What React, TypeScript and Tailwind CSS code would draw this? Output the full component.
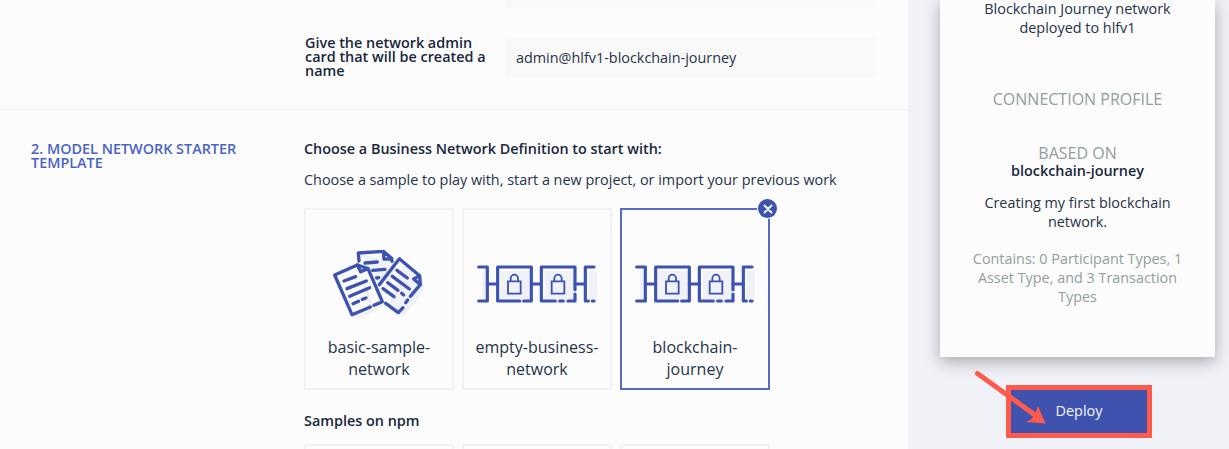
import type { ReactNode } from "react";

function PapersIcon() {
  return (
    <svg viewBox="30 39 294 216" className="h-[72px] w-[98px]" fill="none" strokeLinecap="round" strokeLinejoin="round">
      <path d="M62 125 L146 104 L200 210 L112 254 Z M128 58 L228 84 L218 130 L176 150Z M250 82 L314 138 L306 176 L248 247 L205 210Z" fill="#f1f2f7" />
      <g stroke="#3d53b0" strokeWidth="10">
        <path d="M117 78 L115 54 L190 49 L215 70 L216 79 M190 49 L192 72 L215 72" />
        <path d="M135 84 L172 81 M158 106 L195 103 M170 129 L176 128" />
        <path d="M112 90 L44 120 L96 239 L151 216 M162 211 L187 200 L144 101 L112 90" fill="#fcfcfd" />
        <path d="M112 90 L122 110 L144 101" />
        <path d="M72 138 L107 125 M81 161 L139 138 M89 184 L149 158 M99 206 L116 199 M127 193 L138 189" />
        <path d="M178 149 L238 71 L299 122 L301 149 L271 184 M263 195 L257 203 M249 218 L235 233 L197 205 M299 122 L281 132 L301 149" />
        <path d="M231 106 L262 129 M217 124 L268 162 M203 143 L234 166 M245 175 L251 180 M189 161 L222 185" />
      </g>
    </svg>
  );
}

function ChainIcon() {
  return (
    <svg viewBox="30 39 372 126" className="h-[42px] w-[124px]" fill="none" strokeLinecap="round" strokeLinejoin="round">
      <path d="M51 62h20v98H51z M108 62h97v98h-97z M240 62h93v98h-93z M370 62h26v98h-26z" fill="#f1f2f7" />
      <g stroke="#3d53b0" strokeWidth="9.5">
        <path d="M41 51H67V153H41" />
        <path d="M164 153H98V51H199V153H176" />
        <path d="M271 153H229V51H330V119 M330 132V153H309 M284 153H295" />
        <path d="M387 51H361V153H370 M382 153H387" />
        <path d="M67 102H98 M199 102H229 M330 102H361" />
      </g>
      <g stroke="#3d53b0" strokeWidth="5.5" strokeLinejoin="miter">
        <path d="M129 94H167V131H129Z M137 94V86A11 12 0 0 1 159 86V94" />
        <path d="M260 94H298V131H260Z M268 94V86A11 12 0 0 1 290 86V94" />
      </g>
    </svg>
  );
}

function SampleCard({ icon, selected, children }: { icon: ReactNode; selected?: boolean; children: ReactNode }) {
  return (
    <div
      className={
        selected
          ? "relative flex h-[182px] w-[150px] flex-col items-center border-2 border-[#556bc5] text-center"
          : "relative flex h-[182px] w-[150px] flex-col items-center border-2 border-[#f1f1f8] text-center"
      }
    >
      <div className="flex h-[126px] w-full items-center justify-center pt-[22px]">{icon}</div>
      <div className="text-[16px] leading-[22px]">{children}</div>
      {selected && (
        <span className="absolute -top-[11px] -right-[9px] flex size-[19px] items-center justify-center rounded-full bg-[#3d53b0] ring-1 ring-[#fcfcfd]">
          <svg viewBox="0 0 10 10" className="size-[10px]" stroke="#fcfcfd" strokeWidth="1.9" strokeLinecap="round">
            <path d="M1.5 1.5 8.5 8.5M8.5 1.5 1.5 8.5" />
          </svg>
        </span>
      )}
    </div>
  );
}

export default function App() {
  return (
    <div className="relative flex h-[449px] w-[1229px] overflow-hidden bg-[#f1f2f7] font-['Open_Sans','Noto_Sans',sans-serif] text-[14.4px] text-[#263349]">
      <main className="h-full w-[908px] shrink-0 overflow-hidden bg-[#fcfcfd]">
        <section className="h-[110px] border-b border-[#f1f1f4] pl-[305px]">
          <div className="ml-[200px] h-2 w-[371px] bg-[#f9f9fa]" />
          <div className="mt-[29px] flex">
            <h3 className="-mt-px w-[200px] pr-3 leading-[14px] font-semibold text-[#19273c]">
              Give the network admin
              <br />
              card that will be created a
              <br />
              name
            </h3>
            <div className="flex h-10 w-[371px] items-center bg-[#f9f9fa] pt-px pl-[11px]">admin@hlfv1-blockchain-journey</div>
          </div>
        </section>
        <section className="flex pt-8 pl-[31px]">
          <h2 className="w-[273px] leading-[14px] font-semibold text-[#4a64c5]">
            2. MODEL NETWORK STARTER
            <br />
            TEMPLATE
          </h2>
          <div>
            <h3 className="leading-[14px] font-semibold text-[#19273c]">Choose a Business Network Definition to start with:</h3>
            <p className="mt-[14px] leading-5">Choose a sample to play with, start a new project, or import your previous work</p>
            <div className="mt-[18px] flex gap-2">
              <SampleCard icon={<PapersIcon />}>
                basic-sample-
                <br />
                network
              </SampleCard>
              <SampleCard icon={<ChainIcon />}>
                empty-business-
                <br />
                network
              </SampleCard>
              <SampleCard icon={<ChainIcon />} selected>
                blockchain-
                <br />
                journey
              </SampleCard>
            </div>
            <h3 className="mt-6 leading-[14px] font-semibold text-[#19273c]">Samples on npm</h3>
            <div className="mt-4 flex gap-2">
              <div className="h-[182px] w-[150px] border-2 border-[#f1f1f8]" />
              <div className="h-[182px] w-[150px] border-2 border-[#f1f1f8]" />
              <div className="h-[182px] w-[150px] border-2 border-[#f1f1f8]" />
            </div>
          </div>
        </section>
      </main>
      <aside className="flex w-[321px] flex-col pr-[14px] pl-8">
        <div className="-mt-px h-[358px] w-[275px] bg-[#fcfcfd] text-center shadow-[0_5px_15px_rgba(0,0,0,0.3)]">
          <p className="leading-[19px]">
            Blockchain Journey network
            <br />
            deployed to hlfv1
          </p>
          <h4 className="mt-[53px] text-[16px] leading-[18px] text-[#929e9c]">CONNECTION PROFILE</h4>
          <h4 className="mt-9 text-[16px] leading-[18px] text-[#929e9c]">BASED ON</h4>
          <p className="leading-[18px] font-semibold text-[#19273c]">blockchain-journey</p>
          <p className="mt-[13px] leading-[19px]">
            Creating my first blockchain
            <br />
            network.
          </p>
          <p className="mt-[18px] leading-[19px] text-[#929e9c]">
            Contains: 0 Participant Types, 1
            <br />
            Asset Type, and 3 Transaction
            <br />
            Types
          </p>
        </div>
        <button className="mt-7 ml-[66px] flex h-[53px] w-[146px] items-center justify-center border-[5px] border-[#ff5b4d] bg-[#3f53ae] pb-0.5 text-[#f4f5fb]">
          Deploy
        </button>
      </aside>
      <svg viewBox="0 0 80 60" className="absolute top-[368px] left-[970px] h-[60px] w-20" fill="#ff5b4d">
        <path d="M7.5 5.5 65 47" stroke="#ff5b4d" strokeWidth="5" strokeLinecap="round" />
        <path d="M75.5 55.5 68 38 65.5 45 61.5 51 56 54Z" />
      </svg>
    </div>
  );
}
